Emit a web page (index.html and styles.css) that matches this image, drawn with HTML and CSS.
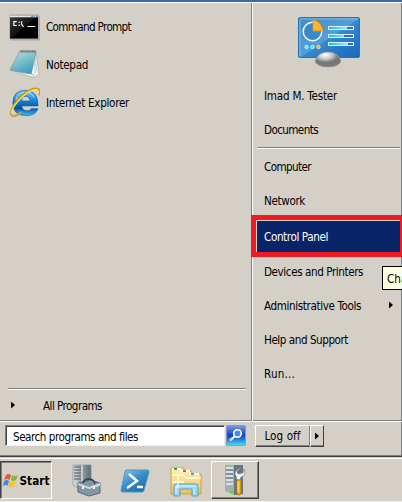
FILE: index.html
```html
<!DOCTYPE html>
<html lang="en">
<head>
<meta charset="utf-8">
<title>Start menu</title>
<link rel="stylesheet" href="styles.css">
</head>
<body>
<main class="start-menu">
  <div class="panes">
    <section class="programs">
      <div class="program"><svg class="program-icon" viewBox="0 0 32 32"><defs><linearGradient id="cmd" x2="1" y2="1"><stop stop-color="#444"/><stop offset=".5" stop-color="#111"/><stop offset=".52" stop-color="#000"/></linearGradient></defs><path d="M2 6h30v25H2z" fill="#aaa69f"/><path d="M.5 4.500h30v25H.5z" fill="url(#cmd)" stroke="#bbb"/><path d="M1 5h29v2H1z" fill="#e2e7ec"/><path d="M23 6h2m1 0h1m1 0h2" stroke="#456a9b"/><path d="M8 11.500H5v4h3M10.500 11.500v1.500m0 1.500v1.500M13 11v3l2 3M19 16.500h8" fill="none" stroke="#fff" stroke-width="1.200"/></svg><span class="w85">Command Prompt</span></div>
      <div class="program"><svg class="program-icon" viewBox="0 0 32 32"><defs><linearGradient id="note" x2=".5" y2="1"><stop stop-color="#c0e1e5"/><stop offset="1" stop-color="#41a2b9"/></linearGradient></defs><path d="M28 4l3 22-5 4-4-4z" fill="#f5f7f7" stroke="#9aa7aa" stroke-width=".7"/><path d="M1 22l24 8 1-3z" fill="#edf4f5" stroke="#87999d" stroke-width=".5"/><path d="M11 3h17l-5 23q-10-1-22-4z" fill="url(#note)" stroke="#64929d" stroke-width=".6"/><path d="M12 3h16" stroke="#5c6b6e" stroke-width="3" stroke-dasharray="1 1"/><path d="M27 8l2 17m-3-13 1 14" stroke="#adb8bb" stroke-width=".7"/></svg><span class="w42">Notepad</span></div>
      <div class="program"><svg class="program-icon" viewBox="0 0 32 32"><defs><linearGradient id="ie" x2="0" y2="1"><stop stop-color="#77cffa"/><stop offset=".45" stop-color="#147dd0"/><stop offset=".7" stop-color="#064ca3"/><stop offset="1" stop-color="#35c4fa"/></linearGradient></defs><path d="M30 20H13q1 5 6 5 3 0 4-2h7q-3 7-12 7Q4 30 4 17T17 4q13 0 13 16zM13 15h9q-1-5-5-5t-4 5z" fill="url(#ie)" fill-rule="evenodd" stroke="#1964ad" stroke-width=".8"/><path d="M7 14Q9 6 17 6q6 0 9 5" fill="none" stroke="#acddfa" stroke-width="1"/><path d="M31 9Q34 1 26 2 17 4 8 15-1 27 3 30q3 2 10-4" fill="none" stroke="#d99a13" stroke-width="1.900"/><path d="M30 7Q31 2 24 4 16 7 8 17 1 26 3 28" fill="none" stroke="#ffe464" stroke-width="1.200"/></svg><span class="w83">Internet Explorer</span></div>
      <div class="all-programs"><i class="arrow"></i><span class="w59">All Programs</span></div>
    </section>
    <nav class="places">
      <svg class="panel-icon" viewBox="0 0 64 54"><defs><linearGradient id="screen" x2="1" y2="1"><stop stop-color="#4389c4"/><stop offset=".5" stop-color="#559fd8"/><stop offset=".52" stop-color="#3589cc"/><stop offset="1" stop-color="#1767ba"/></linearGradient><linearGradient id="bar"><stop stop-color="#10b8f3"/><stop offset="1" stop-color="#c7faff"/></linearGradient><radialGradient id="foot" cx=".4" cy=".2"><stop stop-color="#fff"/><stop offset=".5" stop-color="#ccc"/><stop offset="1" stop-color="#777"/></radialGradient></defs><rect x="1.500" y="1.500" width="61" height="40" rx="1.500" fill="url(#screen)" stroke="#2872b6"/><path d="M3 40V3h58" fill="none" stroke="#80bce8"/><circle cx="15.500" cy="15.500" r="9.300" fill="#3b89c6" stroke="#eafaff" stroke-width="1.500"/><path d="M16 15V4q8 1 10 11z" fill="#ffb22d" stroke="#f18e1b" stroke-width=".7"/><g stroke="#d4f4ff"><rect x="31.500" y="10.500" width="25" height="3" fill="url(#bar)"/><rect x="31.500" y="18.500" width="25" height="3" fill="url(#bar)"/><rect x="31.500" y="26.500" width="25" height="3" fill="url(#bar)"/></g><path d="M50 12h6m-9 8h9m-5 8h5" stroke="#4368be" stroke-width="2"/><g fill="#57e7ed" stroke="#a6faff"><circle cx="9.500" cy="31" r="1.700"/><circle cx="15.500" cy="31" r="1.700"/></g><circle cx="21.500" cy="31" r="1.700" fill="#ffa323" stroke="#ffe0a0"/><path d="M18 45Q21 36 31 36T44 45Q42 51 31 51T18 45z" fill="url(#foot)" stroke="#999" stroke-width=".7"/></svg>
      <a class="place"><span class="w73">Imad M. Tester</span></a>
      <a class="place"><span class="w54">Documents</span></a>
      <div class="separator"></div>
      <a class="place"><span class="w47">Computer</span></a>
      <a class="place"><span class="w41">Network</span></a>
      <a class="place selected"><span class="w64">Control Panel</span></a>
      <a class="place"><span class="w99">Devices and Printers</span></a>
      <a class="place"><span class="w97">Administrative Tools</span><i class="arrow"></i></a>
      <a class="place"><span class="w84">Help and Support</span></a>
      <a class="place"><span class="w31">Run...</span></a>
      <div class="tooltip">Cha</div>
    </nav>
  </div>
  <footer class="search-row">
    <div class="search"><span class="w125">Search programs and files</span></div>
    <svg class="search-button" viewBox="0 0 20 21"><defs><linearGradient id="find" x2="0" y2="1"><stop stop-color="#789be4"/><stop offset=".5" stop-color="#193cc2"/><stop offset="1" stop-color="#43e1fb"/></linearGradient></defs><rect x=".5" y=".5" width="19" height="20" rx="1" fill="url(#find)" stroke="#809bc4"/><circle cx="11.500" cy="8.500" r="3.800" fill="#4a8ae4" stroke="#fff" stroke-width="1.600"/><path d="M8.500 11.500 4 15.500" stroke="#fff" stroke-width="2.200"/></svg>
    <button class="logoff"><span class="w36">Log off</span></button><button class="logoff-more"><i class="arrow"></i></button>
  </footer>
</main>
<div class="taskbar">
  <button class="start"><svg viewBox="0 0 16 16"><path d="M3 3q3-2 5 0L6.500 8Q4 6 1 8z" fill="#eb5927"/><path d="M9 3q3 2 6 0l-2 5q-3 2-5 0z" fill="#79ba43"/><path d="M1 9q3-2 5 0l-1.500 5Q3 12 0 14z" fill="#3a8ddd"/><path d="M7 9q3 2 6 0l-2 5q-3 2-5.500 0z" fill="#fac529"/></svg><span class="w30">Start</span></button>
  <svg class="manager" viewBox="0 0 30 34"><defs><linearGradient id="metal"><stop stop-color="#dce1e3"/><stop offset=".5" stop-color="#929da2"/><stop offset="1" stop-color="#5d6d74"/></linearGradient></defs><path d="M2 2h18v23l-9 3-9-6z" fill="url(#metal)" stroke="#79878d" stroke-width=".6"/><path d="M3 4h7M3 7h7M3 10h7M3 13h7M3 16h7" stroke="#4d5a60"/><path d="M11 2v17" stroke="#f6f8f8"/><path d="m7 20 12-3 10 3v10l-11 3-11-4z" fill="#8198a5" stroke="#526872"/><path d="m7 20 11 4 11-4v3l-11 3-11-4z" fill="#cbd9df"/><path d="M12 20q1-4 6-4 5 0 6 5" fill="none" stroke="#333f45" stroke-width="1.500"/><path d="M12 23v3m11-3v3" stroke="#eef6f8" stroke-width="2"/></svg>
  <svg class="powershell" viewBox="0 0 30 28"><defs><linearGradient id="ps" x2=".8" y2="1"><stop stop-color="#8ac8ec"/><stop offset=".5" stop-color="#398ec8"/><stop offset="1" stop-color="#1767a6"/></linearGradient></defs><path d="M7 3h21q1 0 1 2l-5 18q0 2-2 2H2q-1 0-1-2L5 5q0-2 2-2z" fill="url(#ps)" stroke="#4b99c6"/><path d="m9 7 8 7-10 7M17 20h6" fill="none" stroke="#fff" stroke-width="2.500"/></svg>
  <svg class="explorer" viewBox="0 0 34 32"><defs><linearGradient id="folder" x2="0" y2="1"><stop stop-color="#fff4b6"/><stop offset="1" stop-color="#e5c25e"/></linearGradient></defs><path d="M2 6V3h13v3h8v3h9v20H2z" fill="url(#folder)" stroke="#c5a344"/><path d="M4 4h8m0 2h9m-1 3h10" stroke="#fff" stroke-width="2"/><path d="M5 4h3" stroke="#26a934" stroke-width="2"/><path d="M14 6h3" stroke="#db5142" stroke-width="2"/><path d="M22 9h3" stroke="#2eace7" stroke-width="2"/><path d="M3 10h11l3 3h15" fill="none" stroke="#fffbd7" stroke-width="1.500"/><path d="M5 31V21q0-2 2-2h20q2 0 2 2v10h-6v-7H11v7z" fill="#a0d6ef" stroke="#579ec8"/><path d="M7 21h20M7 21v8m18-5v5" stroke="#d9f6ff"/><path d="M9 11v12M3 17h12" stroke="#fffce8" stroke-width="1.300"/></svg>
  <button class="task-active"><svg viewBox="0 0 22 34"><path d="M1 2h9v30l-9-4z" fill="#a4afb5"/><path d="M10 2h9v29l-9 1z" fill="#68767e"/><path d="M2 5h7M2 9h7M2 13h7M2 17h7M2 21h7" stroke="#edf2f4" stroke-width="1.500"/><path d="M2 7h7M2 11h7M2 15h7" stroke="#60717b"/><path d="M6 29h3" stroke="#59da1d" stroke-width="2.500"/><path d="M17 5l-4 3 1 3 5-1 1-4q3 6-3 8l-1 3h-3l-1-4Q9 10 14 6z" fill="#f3f5f6" stroke="#74828a" stroke-width=".7"/><path d="M13 17h4v13q-2 4-4 0z" fill="#f6b51d" stroke="#aa7210"/><path d="M14 18v11" stroke="#ffe58c"/></svg></button>
</div>
<script src="fit.js"></script>
</body>
</html>
```
FILE: fit.js
```js
// Spread the letter spacing of every label so it fills the width named by its class.
document.querySelectorAll('span[class^="w"]').forEach(function (label) {
  var want = Number(label.className.slice(1));
  var have = label.getBoundingClientRect().width;
  label.style.letterSpacing = (want - have) / label.textContent.length + 'px';
});
```
FILE: styles.css
```css
* { box-sizing: border-box; }
body { margin: 0; width: 402px; height: 502px; overflow: hidden; background: #d4d0c8; color: #000; font: 11.6px/16px Tahoma, "DejaVu Sans Condensed", "DejaVu Sans", sans-serif; font-stretch: condensed; }
svg { display: block; flex: none; }
span { white-space: nowrap; }
button { margin: 0; padding: 0; font: inherit; color: inherit; background: #d4d0c8; display: flex; align-items: center; justify-content: center; }
.start-menu { height: 457px; border-top: 2px solid #3f69aa; border-bottom: 1px solid #404040; box-shadow: inset 0 1px #fff, inset -1px -1px #808080; }
.panes { display: flex; height: 420px; padding-top: 1px; border-bottom: 1px solid #fff; box-shadow: inset 0 -1px #808080; }
.programs { width: 251px; padding: 4px 0 0 9px; display: flex; flex-direction: column; }
.program { display: flex; align-items: center; height: 38px; gap: 6px; }
.program span, .place span, .all-programs span, .start span { padding-top: 2px; }
.program-icon { width: 31px; height: 32px; }
.all-programs { margin: auto 5px 0 -1px; height: 33px; border-top: 1px solid #808080; box-shadow: inset 0 1px #fff; display: flex; align-items: center; padding-left: 3px; gap: 28px; }
.arrow { display: block; flex: none; width: 4px; height: 7px; background: #000; clip-path: polygon(0 0, 100% 50%, 0 100%); }
.places { position: relative; width: 151px; border-left: 1px solid #808080; border-right: 1px solid #808080; box-shadow: inset 1px 0 #fff; padding-top: 13px; display: flex; flex-direction: column; }
.panel-icon { width: 64px; height: 54px; margin: 0 0 8px 45px; }
.place { display: flex; flex: none; align-items: center; height: 34px; padding: 0 8px 0 12px; justify-content: space-between; }
.separator { height: 2px; flex: none; margin: 1px 1px 0 5px; border-top: 1px solid #808080; border-bottom: 1px solid #fff; }
.selected { position: relative; z-index: 1; height: 42px; margin: -2px -1px -3px -1px; padding-left: 8px; background: #0a246a; color: #fff; border: 5px solid #ed1c24; border-right-width: 2px; box-shadow: inset 1px 1px #d4d0c8; }
.tooltip { position: absolute; left: 130px; top: 263px; height: 24px; width: 28px; padding: 4px; border: 1px solid #000; background: #ffffe1; }
.search-row { display: flex; height: 34px; padding: 3px 0 0 5px; }
.search { width: 220px; height: 21px; background: #fff; border: 1px solid #808080; border-right-color: #eee; border-bottom-color: #eee; box-shadow: inset 1px 1px #404040; padding: 3px 7px; }
.search-button { width: 20px; height: 21px; margin: 0 9px 0 1px; }
.logoff, .logoff-more { height: 22px; border: 1px solid #fff; border-right-color: #808080; border-bottom-color: #404040; box-shadow: inset 0 -1px #808080; }
.logoff { width: 55px; }
.logoff-more { width: 14px; border-right-color: #404040; }
.taskbar { height: 45px; border-bottom: 1px solid #f3f2ed; display: flex; padding-top: 4px; box-shadow: inset 0 1px #d4d0c8, inset 0 2px #fff; }
.start { width: 52px; height: 38px; gap: 1px; font-weight: bold; border: 1px solid #404040; border-right-color: #fff; border-bottom-color: #fff; box-shadow: inset 1px 1px #808080; }
.start svg { width: 16px; height: 16px; }
.manager { width: 30px; height: 34px; margin: 2px 0 0 19px; }
.powershell { width: 30px; height: 28px; margin: 6px 0 0 19px; }
.explorer { width: 34px; height: 32px; margin: 4px 0 0 19px; }
.task-active { width: 48px; height: 38px; margin-left: 8px; border: 1px solid #fff; border-right-color: #404040; border-bottom-color: #404040; box-shadow: inset -1px -1px #808080; }
.task-active svg { width: 22px; height: 34px; }
```
